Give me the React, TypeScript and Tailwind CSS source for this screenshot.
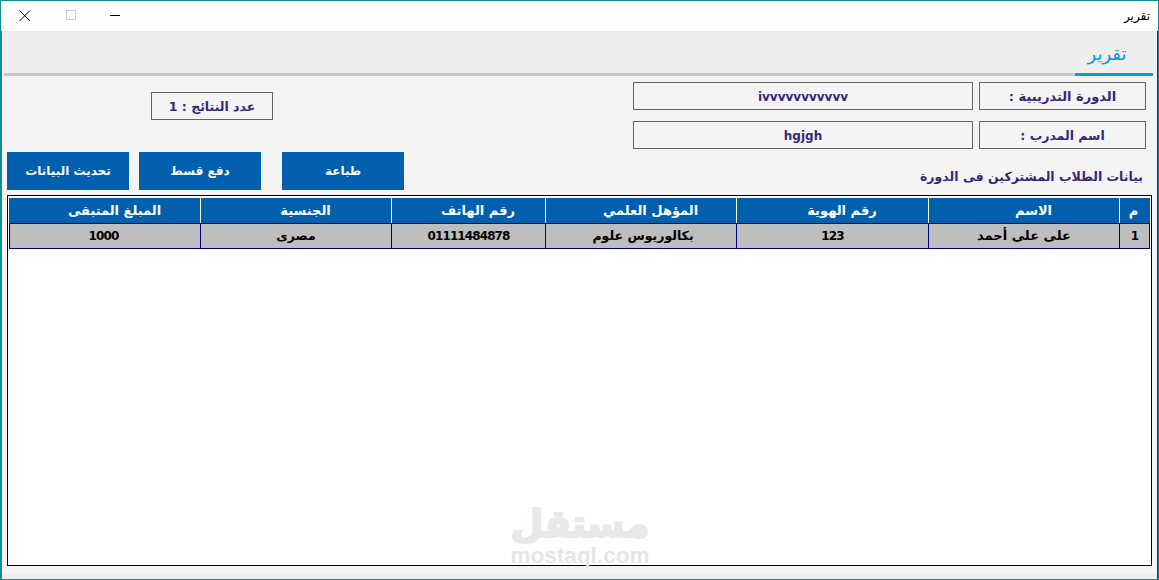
const arabic = "font-['DejaVu_Sans','Noto_Sans',sans-serif]";

const headers = ["م", "الاسم", "رقم الهوية", "المؤهل العلمي", "رقم الهاتف", "الجنسية", "المبلغ المتبقى"];
const digits = "text-[12px] tracking-[-0.9px]";
const cells = [
  { text: "1", size: digits, pad: "" },
  { text: "على على أحمد", size: "text-[13px]", pad: "" },
  { text: "123", size: digits, pad: "" },
  { text: "بكالوريوس علوم", size: "text-[12.5px]", pad: "pl-[4px]" },
  { text: "01111484878", size: digits, pad: "" },
  { text: "مصرى", size: "text-[12.5px]", pad: "" },
  { text: "1000", size: digits, pad: "pr-[3px]" },
];

function InfoBox({ className, children }: { className: string; children: React.ReactNode }) {
  return (
    <div className={`flex items-center justify-center border border-[#646464] font-bold text-[#35287a] ${className}`}>
      {children}
    </div>
  );
}

function ActionButton({ className = "", children }: { className?: string; children: React.ReactNode }) {
  return (
    <button className={`flex h-[38px] w-[122px] items-center justify-center bg-[#0060ae] text-[12px] font-bold text-white ${className}`}>
      {children}
    </button>
  );
}

export default function App() {
  return (
    <div dir="ltr" className={`flex h-[580px] w-[1159px] flex-col overflow-hidden border-x border-b border-t border-[#148f8f] bg-white ${arabic}`}>
      <div className="flex h-[30px] shrink-0 items-start justify-between bg-white pl-[17px] pr-[8px] pt-[8px]">
        <div className="flex items-start">
          <svg width="14" height="14" viewBox="0 0 14 14" className="mr-[34px]">
            <path d="M1.5 1.5 L12 12 M12 1.5 L1.5 12" stroke="#000" strokeWidth="1" fill="none" />
          </svg>
          <div className="mr-[34px] mt-px h-[10px] w-[10px] border border-[#cccccc]" />
          <div className="mt-[6px] h-px w-[10px] bg-black" />
        </div>
        <span className="-mt-px text-[12px] leading-[16px] text-black">تقرير</span>
      </div>

      <div className="relative flex min-h-0 flex-1 flex-col border-x border-l-[#148f8f] border-r-[#333333] bg-[#f4f4f4]">
        <div className="flex h-[45px] shrink-0 flex-col justify-end bg-[#eeeeee] pl-[2px] pr-[4px]">
          <div className="flex h-[42px] items-end justify-end">
            <div className="flex h-[42px] w-[78px] items-center justify-center border-b-[3px] border-[#00a0d8] pr-[14px] text-[18px] text-[#00a0d8]">
              تقرير
            </div>
          </div>
        </div>
        <div className="ml-[2px] mr-[82px] -mt-[3px] h-[3px] shrink-0 bg-[#c8c8c8]" />

        <div className="flex shrink-0 justify-between pl-[149px] pr-[11px] pt-[6px]">
          <InfoBox className="mt-[10px] h-[28px] w-[122px] pt-[2px] text-[12.5px]">
            <span dir="rtl">عدد النتائج : 1</span>
          </InfoBox>
          <div className="flex flex-col gap-[11px]">
            <div className="flex gap-[6px]">
              <InfoBox className="h-[28px] w-[340px] pt-px text-[12px]">ivvvvvvvvvvv</InfoBox>
              <InfoBox className="h-[28px] w-[167px] pt-[2px] text-[13px]">
                <span dir="rtl">الدورة التدريبية :</span>
              </InfoBox>
            </div>
            <div className="flex gap-[6px]">
              <InfoBox className="h-[28px] w-[340px] pt-px text-[12px]">hgjgh</InfoBox>
              <InfoBox className="h-[28px] w-[167px] pt-[2px] text-[12.5px]">
                <span dir="rtl">اسم المدرب :</span>
              </InfoBox>
            </div>
          </div>
        </div>

        <div className="mt-[3px] flex shrink-0 items-center pl-[5px] pr-[14px]">
          <ActionButton className="mr-[10px]">تحديث البيانات</ActionButton>
          <ActionButton className="mr-[21px]">دفع قسط</ActionButton>
          <ActionButton>طباعة</ActionButton>
          <span dir="rtl" className="ml-auto pt-[12px] text-[12.5px] font-bold text-[#35287a]">
            بيانات الطلاب المشتركين فى الدورة
          </span>
        </div>

        <div dir="rtl" className="mb-[8px] ml-[5px] mr-[5px] mt-[5px] min-h-0 flex-1 border border-black bg-white pl-px pr-px pt-[2px]">
          <div className="grid grid-cols-[31px_191px_192px_191px_154px_191px_1fr]">
            {headers.map((h, i) => (
              <div
                key={h}
                className={`flex h-[25px] items-center justify-center border-l bg-[#0060ae] text-[13px] font-bold text-white ${i === 6 ? "border-l-[#0060ae]" : "border-l-white"} ${i === 0 ? "pr-[3px]" : "pl-[19px]"}`}
              >
                {h}
              </div>
            ))}
            {cells.map((c, i) => (
              <div
                key={c.text}
                className={`flex h-[26px] items-center justify-center border-y border-l border-[#000080] bg-[#bebebe] font-bold text-black ${c.size} ${c.pad} ${i === 0 ? "border-r" : ""}`}
              >
                {c.text}
              </div>
            ))}
          </div>
        </div>
        <div className="h-[5px] shrink-0 bg-[#eeeeee]" />

        <div className="pointer-events-none absolute left-[507px] top-[472px] flex h-[64px] w-[142px] flex-col items-center">
          <span className="h-[42px] text-[38px] font-bold leading-[42px] text-[#e8e8e8] [-webkit-text-stroke:2px_#e8e8e8]">مستقل</span>
          <span className="font-['Liberation_Sans',sans-serif] text-[22.5px] font-bold leading-[22px] text-[#e6e6e6]">mostaql.com</span>
        </div>
      </div>
    </div>
  );
}
